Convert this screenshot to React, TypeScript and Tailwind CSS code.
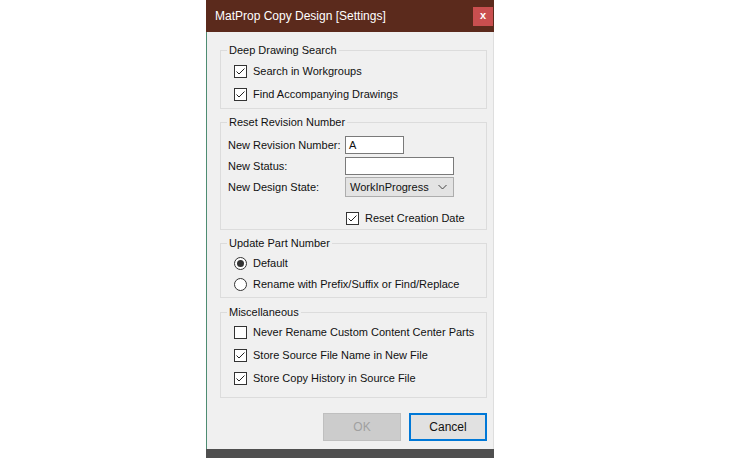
import { ReactNode } from 'react';

const font = { fontFamily: '"Liberation Sans", Arial, sans-serif' };

function CheckBox({ checked }: { checked: boolean }) {
  return (
    <span className="w-[13px] h-[13px] shrink-0 border border-[#333333] bg-white flex items-center justify-center">
      {checked && (
        <svg width="11" height="11" viewBox="0 0 11 11">
          <path d="M1.5 5.5 L4 8 L9.5 2.5" fill="none" stroke="#222222" strokeWidth="1" />
        </svg>
      )}
    </span>
  );
}

function Radio({ checked }: { checked: boolean }) {
  return (
    <span className="w-[13px] h-[13px] shrink-0 rounded-full border border-[#333333] bg-white flex items-center justify-center">
      {checked && <span className="w-[7px] h-[7px] rounded-full bg-[#333333]" />}
    </span>
  );
}

function CheckRow({ label, checked }: { label: string; checked: boolean }) {
  return (
    <div className="h-[23px] flex items-center gap-[6px]">
      <CheckBox checked={checked} />
      <span>{label}</span>
    </div>
  );
}

function RadioRow({ label, checked }: { label: string; checked: boolean }) {
  return (
    <div className="h-[21px] flex items-center gap-[6px]">
      <Radio checked={checked} />
      <span>{label}</span>
    </div>
  );
}

// group box: legend sits on the top border, padding goes on the inner div
function Group({ title, className, inner, children }: { title: string; className: string; inner: string; children: ReactNode }) {
  return (
    <fieldset className={`border border-[#dcdcdc] w-[267px] ${className}`}>
      <legend className="ml-[6px] px-[2px] leading-[14px]">{title}</legend>
      <div className={inner}>{children}</div>
    </fieldset>
  );
}

export default function App() {
  return (
    <div className="w-[733px] h-[458px] bg-white flex text-[11px] text-[#111111]" style={font}>
      <div className="ml-[206px] w-[288px] h-[458px] flex flex-col">
        {/* Title bar */}
        <div className="h-[32px] bg-[#5b2a1c] flex items-center justify-between pl-[9px] pr-[1px]">
          <span className="text-[12px] text-white">MatProp Copy Design [Settings]</span>
          <span className="w-[20px] h-[19px] bg-[#c94f4f] text-white text-[11px] font-bold flex items-center justify-center leading-none pb-[2px]">
            x
          </span>
        </div>

        {/* Body */}
        <div className="flex-1 bg-[#f0f0f0] border-l border-[#4e8c72] border-r border-r-[#dedede] pt-[11px] pl-[13px] flex flex-col">
          <Group title="Deep Drawing Search" className="" inner="pl-[13px] pt-[3px] pb-[2px]">
            <CheckRow label="Search in Workgroups" checked />
            <CheckRow label="Find Accompanying Drawings" checked />
          </Group>

          <Group title="Reset Revision Number" className="mt-[6px]" inner="pl-[7px] pt-[7px] pb-[1px]">
            <div className="h-[18px] flex items-center">
              <span className="w-[117px]">New Revision Number:</span>
              <span className="w-[59px] h-[18px] bg-white border border-[#7a7a7a] flex items-center pl-[3px]">A</span>
            </div>
            <div className="h-[18px] mt-[3px] flex items-center">
              <span className="w-[117px]">New Status:</span>
              <span className="w-[109px] h-[18px] bg-white border border-[#7a7a7a]" />
            </div>
            <div className="h-[20px] mt-[2px] flex items-center">
              <span className="w-[117px]">New Design State:</span>
              <span className="w-[109px] h-[20px] bg-[#e3e3e3] border border-[#adadad] flex items-center justify-between pl-[4px] pr-[6px]">
                <span>WorkInProgress</span>
                <svg width="9" height="6" viewBox="0 0 9 6">
                  <path d="M0.5 1 L4.5 5 L8.5 1" fill="none" stroke="#444444" strokeWidth="1" />
                </svg>
              </span>
            </div>
            <div className="h-[20px] mt-[11px] pl-[118px] flex items-center gap-[6px]">
              <CheckBox checked />
              <span>Reset Creation Date</span>
            </div>
          </Group>

          <Group title="Update Part Number" className="mt-[6px]" inner="pl-[13px] pt-[3px] pb-[2px]">
            <RadioRow label="Default" checked />
            <RadioRow label="Rename with Prefix/Suffix or Find/Replace" checked={false} />
          </Group>

          <Group title="Miscellaneous" className="mt-[7px]" inner="pl-[13px] pt-[2px] pb-[7px]">
            <CheckRow label="Never Rename Custom Content Center Parts" checked={false} />
            <CheckRow label="Store Source File Name in New File" checked />
            <CheckRow label="Store Copy History in Source File" checked />
          </Group>

          <div className="mt-[15px] w-[267px] flex justify-end gap-[8px]">
            <button className="w-[78px] h-[28px] bg-[#cccccc] border border-[#bfbfbf] text-[#a0a0a0] text-[12px]">OK</button>
            <button className="w-[78px] h-[28px] bg-[#e1e1e1] border-2 border-[#0078d7] text-[12px]">Cancel</button>
          </div>
        </div>

        {/* Bottom edge */}
        <div className="h-[9px] bg-[#4f4f4f]" />
      </div>
    </div>
  );
}
